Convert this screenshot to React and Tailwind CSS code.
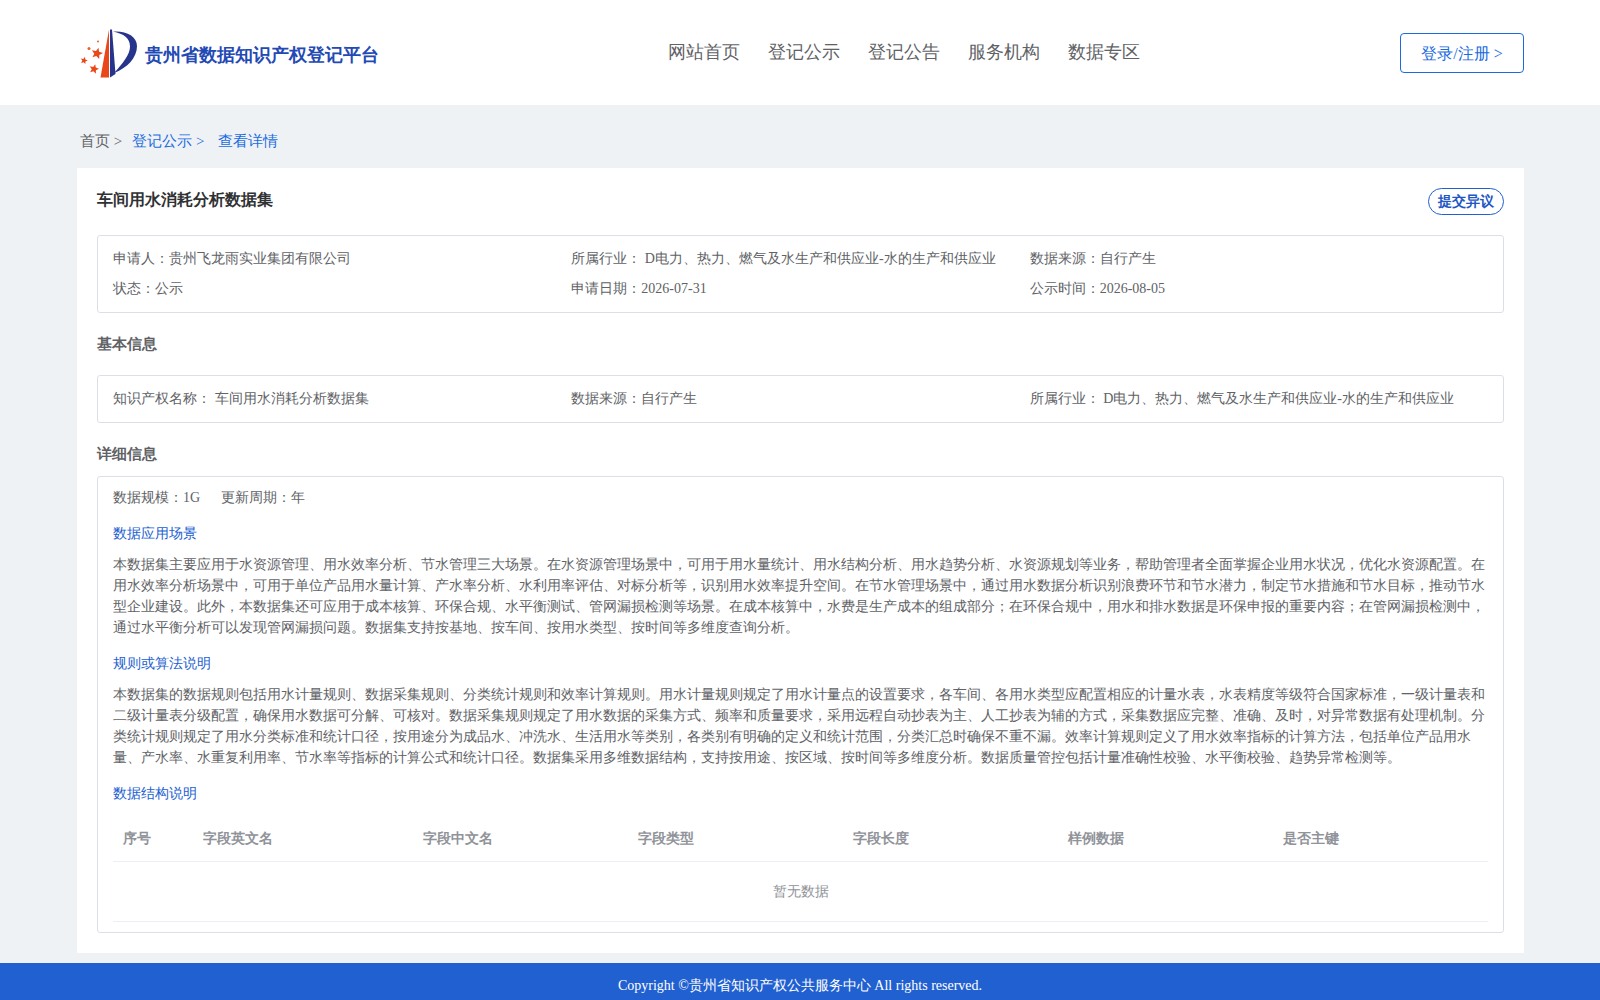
const navItems = ['网站首页', '登记公示', '登记公告', '服务机构', '数据专区']

const columns = ['序号', '字段英文名', '字段中文名', '字段类型', '字段长度', '样例数据', '是否主键']

function starPoints(cx, cy, r) {
  const pts = []
  for (let i = 0; i < 10; i++) {
    const rad = i % 2 === 0 ? r : r * 0.45
    const a = (Math.PI / 5) * i - Math.PI / 2 + 0.25
    pts.push(`${(cx + rad * Math.cos(a)).toFixed(2)},${(cy + rad * Math.sin(a)).toFixed(2)}`)
  }
  return pts.join(' ')
}

function Logo() {
  return (
    <svg width="60" height="54" viewBox="0 0 60 54" className="shrink-0">
      <path d="M29 3.5 L29 51.5 L20.5 51.5 Z" fill="#e8481a" />
      <path d="M30 3.5 L30 51.5 L35.5 48 L32 3.5 Z" fill="#27348b" />
      <path d="M33 5.5 C46 4.5 57 10 57 20 C57 32 47 42 34 47 C42 38 50 29 50 20.5 C50 12 44 8 33 5.5 Z" fill="#27348b" />
      <polygon points={starPoints(17, 27.5, 6)} fill="#e8481a" />
      <polygon points={starPoints(4, 34.5, 3.8)} fill="#e8481a" />
      <polygon points={starPoints(14, 43, 5)} fill="#e8481a" />
      <circle cx="9" cy="22.5" r="1.5" fill="#e8602c" />
      <circle cx="18" cy="15.5" r="1" fill="#e8602c" />
    </svg>
  )
}

function Header() {
  return (
    <header className="h-[105px] bg-white flex items-center justify-between pl-[80px] pr-[76px]">
      <div className="flex items-center gap-[5px] w-[327px]">
        <Logo />
        <span className="text-[18px] font-bold text-[#2349b4] mt-[6px]">贵州省数据知识产权登记平台</span>
      </div>
      <nav className="flex gap-[28px] text-[18px] text-[#606266]">
        {navItems.map(item => <a key={item}>{item}</a>)}
      </nav>
      <button className="w-[124px] h-[40px] pt-[2px] border border-[#1a6be0] rounded text-[16px] text-[#1a6be0] bg-white mt-[1px]">
        登录/注册 &gt;
      </button>
    </header>
  )
}

function Section({ title, children }) {
  return (
    <div>
      <h3 className="text-[14px] leading-[21px] text-[#2160d0] mt-[15px] mb-[10px]">{title}</h3>
      {children}
    </div>
  )
}

export default function App() {
  return (
    <div className="min-h-[1000px] flex flex-col bg-[#eff2f5] text-[#606266] font-['Liberation_Serif',serif]">
      <Header />

      <div className="flex items-center pl-[80px] pt-[10px] h-[63px] text-[15px]">
        <span className="text-[#606266] mr-[10px]">首页 &gt;</span>
        <span className="text-[#1a6be0] mr-[14px]">登记公示 &gt;</span>
        <span className="text-[#1a6be0]">查看详情</span>
      </div>

      <main className="w-[1447px] h-[785px] bg-white px-[20px] pt-[20px] ml-[77px]">
        <div className="flex justify-between items-start h-[47px]">
          <h1 className="text-[16px] font-bold text-[#303133] leading-[24px]">车间用水消耗分析数据集</h1>
          <button className="w-[76px] h-[27px] border border-[#2160d0] rounded-[14px] text-[14px] font-bold text-[#2156c4] bg-white">提交异议</button>
        </div>

        <div className="border border-[#dcdfe6] rounded-[3px] px-[15px] py-[7px] h-[78px] grid grid-cols-3 auto-rows-[30px] items-center text-[14px]">
          <div>申请人：贵州飞龙雨实业集团有限公司</div>
          <div>所属行业： D电力、热力、燃气及水生产和供应业-水的生产和供应业</div>
          <div>数据来源：自行产生</div>
          <div>状态：公示</div>
          <div>申请日期：2026-07-31</div>
          <div>公示时间：2026-08-05</div>
        </div>

        <h2 className="text-[15px] font-bold leading-[22px] mt-[20px] mb-[20px]">基本信息</h2>

        <div className="border border-[#dcdfe6] rounded-[3px] px-[15px] pb-[2px] h-[48px] grid grid-cols-3 items-center text-[14px]">
          <div>知识产权名称： 车间用水消耗分析数据集</div>
          <div>数据来源：自行产生</div>
          <div>所属行业： D电力、热力、燃气及水生产和供应业-水的生产和供应业</div>
        </div>

        <h2 className="text-[15px] font-bold leading-[22px] mt-[20px] mb-[11px]">详细信息</h2>

        <div className="border border-[#dcdfe6] rounded-[3px] px-[15px] h-[457px] text-[14px]">
          <div className="flex gap-[21px] h-[31px] pt-[9px] items-center">
            <span>数据规模：1G</span>
            <span>更新周期：年</span>
          </div>

          <Section title="数据应用场景">
            <p className="leading-[21px]">
              本数据集主要应用于水资源管理、用水效率分析、节水管理三大场景。在水资源管理场景中，可用于用水量统计、用水结构分析、用水趋势分析、水资源规划等业务，帮助管理者全面掌握企业用水状况，优化水资源配置。在用水效率分析场景中，可用于单位产品用水量计算、产水率分析、水利用率评估、对标分析等，识别用水效率提升空间。在节水管理场景中，通过用水数据分析识别浪费环节和节水潜力，制定节水措施和节水目标，推动节水型企业建设。此外，本数据集还可应用于成本核算、环保合规、水平衡测试、管网漏损检测等场景。在成本核算中，水费是生产成本的组成部分；在环保合规中，用水和排水数据是环保申报的重要内容；在管网漏损检测中，通过水平衡分析可以发现管网漏损问题。数据集支持按基地、按车间、按用水类型、按时间等多维度查询分析。
            </p>
          </Section>

          <Section title="规则或算法说明">
            <p className="leading-[21px]">
              本数据集的数据规则包括用水计量规则、数据采集规则、分类统计规则和效率计算规则。用水计量规则规定了用水计量点的设置要求，各车间、各用水类型应配置相应的计量水表，水表精度等级符合国家标准，一级计量表和二级计量表分级配置，确保用水数据可分解、可核对。数据采集规则规定了用水数据的采集方式、频率和质量要求，采用远程自动抄表为主、人工抄表为辅的方式，采集数据应完整、准确、及时，对异常数据有处理机制。分类统计规则规定了用水分类标准和统计口径，按用途分为成品水、冲洗水、生活用水等类别，各类别有明确的定义和统计范围，分类汇总时确保不重不漏。效率计算规则定义了用水效率指标的计算方法，包括单位产品用水量、产水率、水重复利用率、节水率等指标的计算公式和统计口径。数据集采用多维数据结构，支持按用途、按区域、按时间等多维度分析。数据质量管控包括计量准确性校验、水平衡校验、趋势异常检测等。
            </p>
          </Section>

          <Section title="数据结构说明">
            <div>
              <div className="grid grid-cols-[80px_220px_215px_215px_215px_215px_215px] h-[48px] items-center border-b border-[#ebeef5] text-[14px] font-bold text-[#909399]">
                {columns.map(c => <div key={c} className="px-[10px] pt-[1px]">{c}</div>)}
              </div>
              <div className="h-[60px] flex items-center justify-center border-b border-[#ebeef5] text-[#909399]">暂无数据</div>
            </div>
          </Section>
        </div>
      </main>

      <footer className="mt-[10px] h-[37px] pt-[8px] bg-[#2160d0] text-white text-[14px] flex items-center justify-center">
        Copyright ©贵州省知识产权公共服务中心 All rights reserved.
      </footer>
    </div>
  )
}
